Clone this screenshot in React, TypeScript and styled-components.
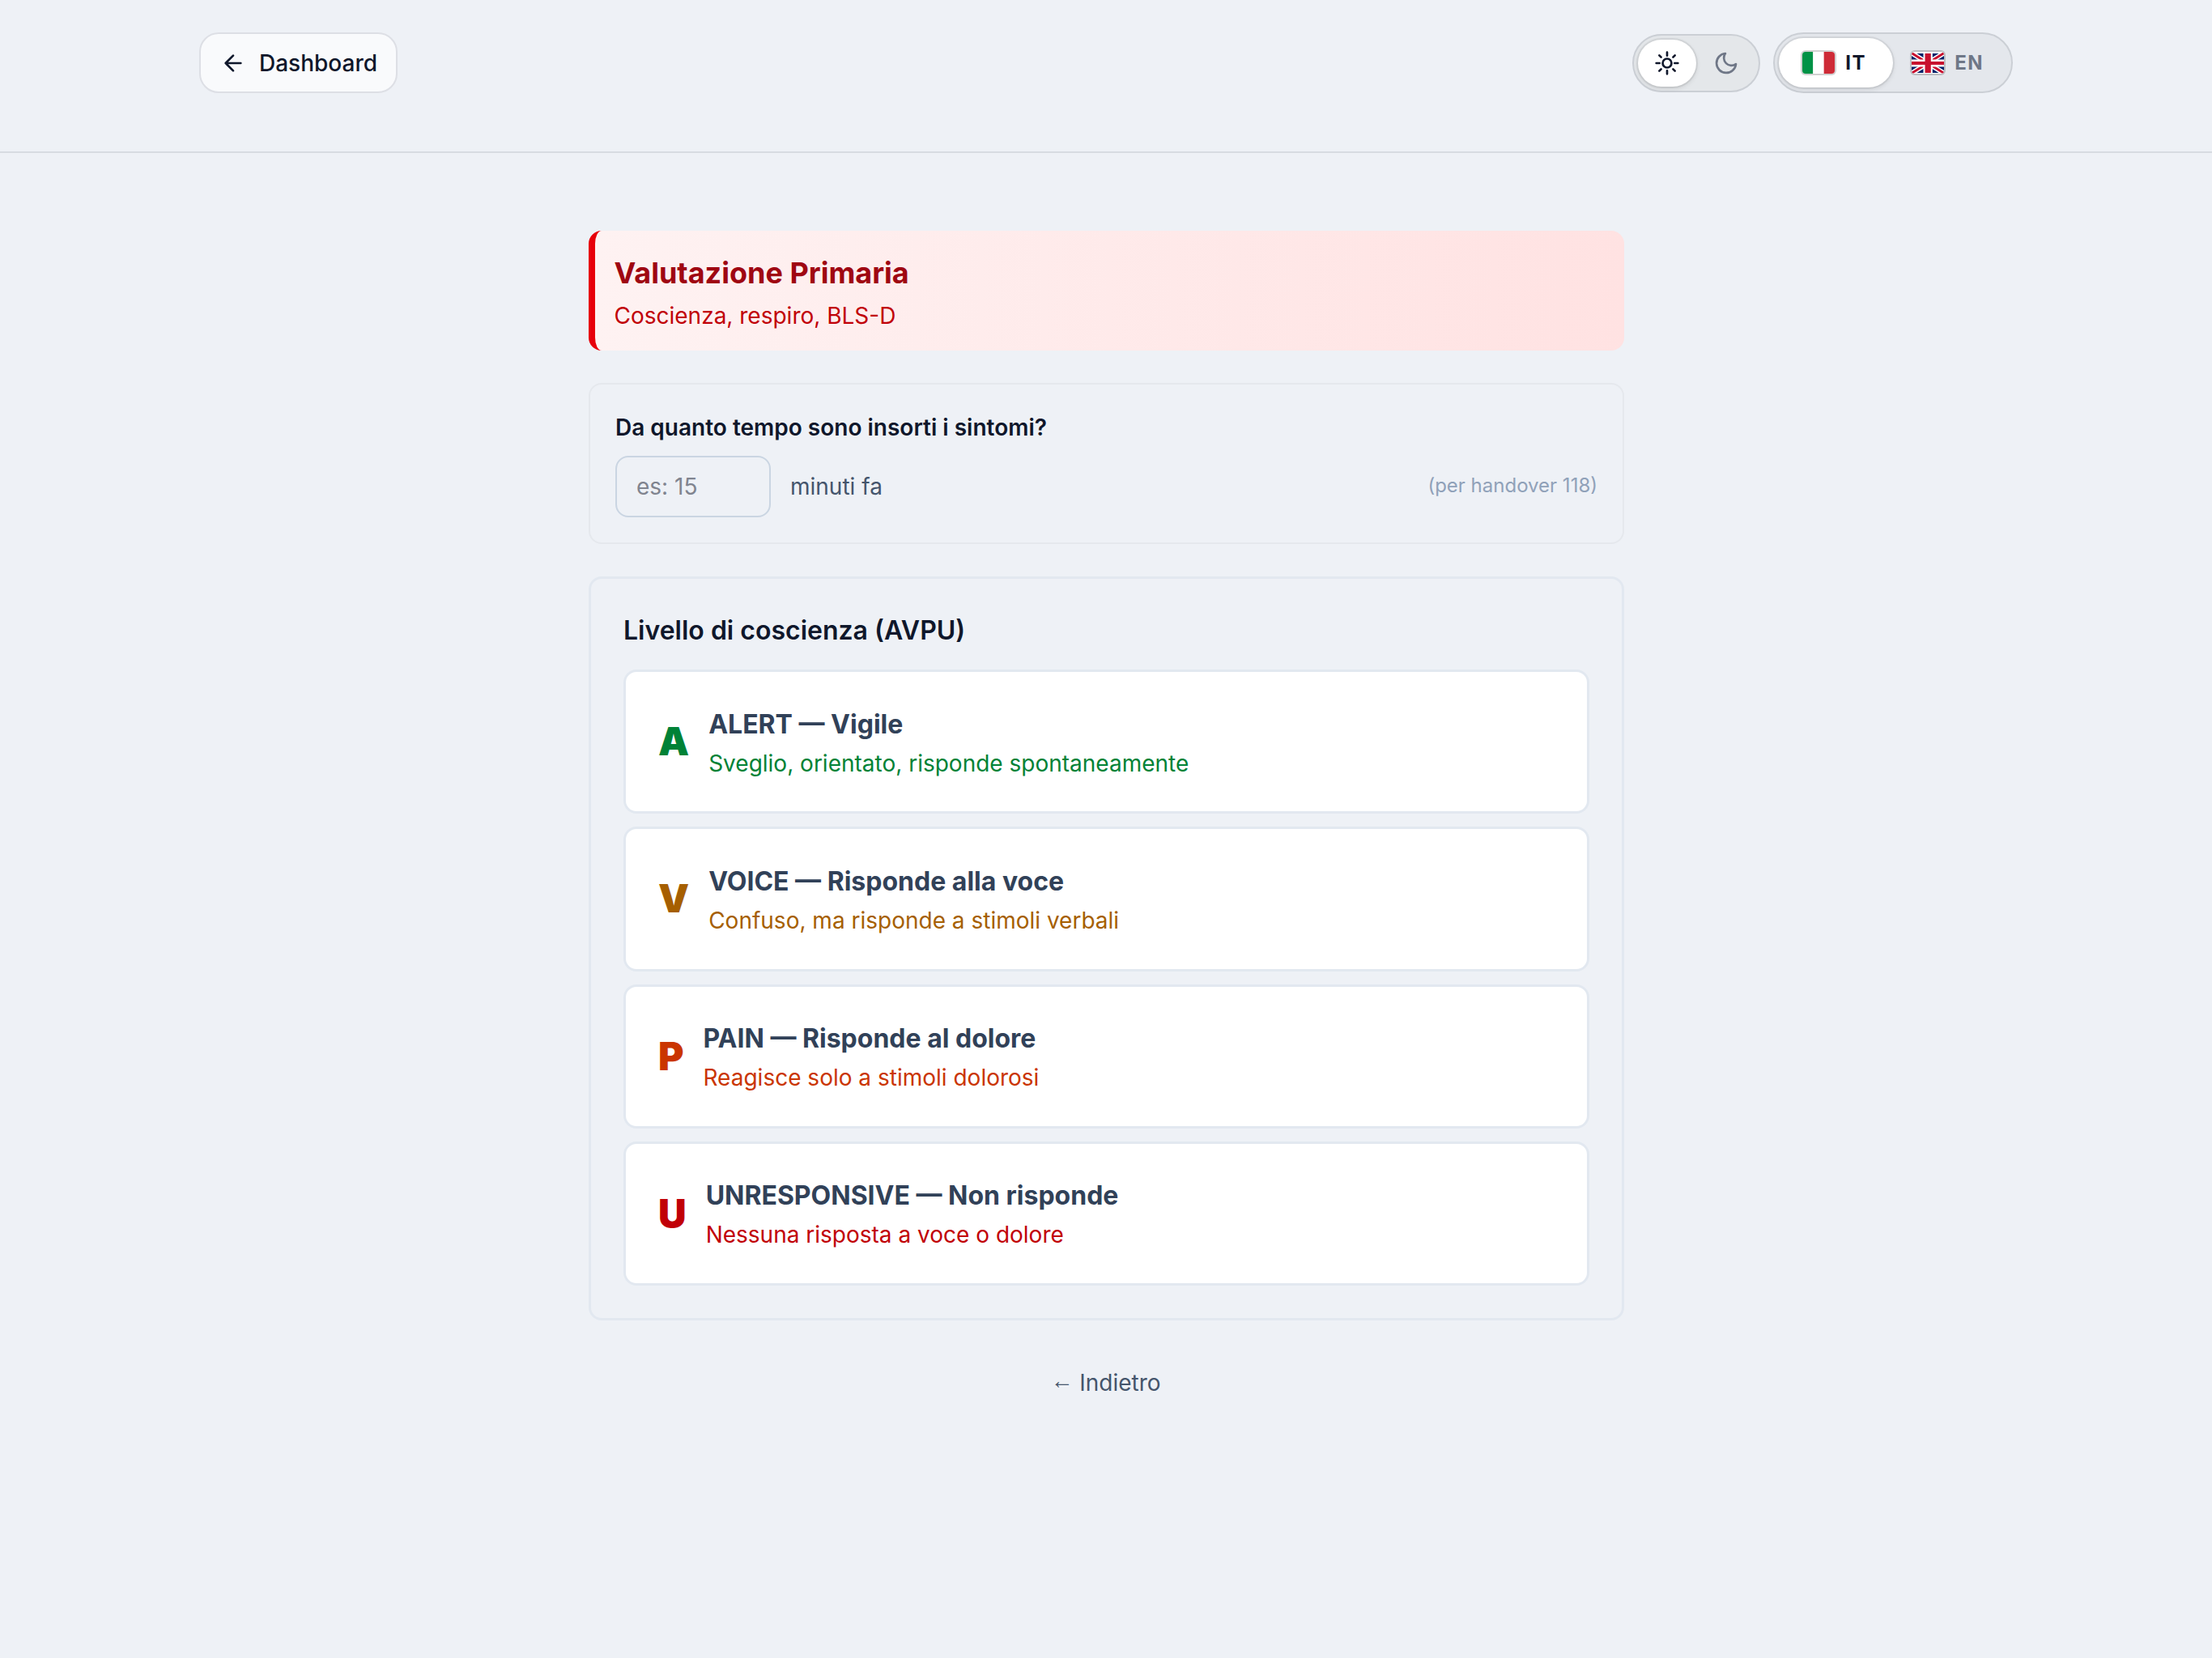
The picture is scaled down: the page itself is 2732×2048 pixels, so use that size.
import styled, { createGlobalStyle } from 'styled-components';

const GlobalStyle = createGlobalStyle`
  *,
  *::before,
  *::after {
    box-sizing: border-box;
  }

  body {
    margin: 0;
    min-height: 2048px;
    background: #eef1f6;
    color: #0f172b;
    font-family: Inter, 'Liberation Sans', sans-serif;
    font-size: 28px;
    line-height: 40px;
  }

  button,
  input {
    margin: 0;
    font: inherit;
    color: inherit;
  }
`;

const Header = styled.header`
  height: 189px;
  padding-top: 40px;
  border-bottom: 2px solid #d7dbe1;
`;

const HeaderInner = styled.div`
  display: flex;
  align-items: center;
  justify-content: space-between;
  width: 2240px;
  height: 75px;
  margin: 0 auto;
`;

const DashboardLink = styled.button`
  display: flex;
  align-items: center;
  gap: 16px;
  height: 75px;
  padding: 0 23px 0 24px;
  border: 2px solid #dddfe5;
  border-radius: 24px;
  background: #f9fafc;
  font-weight: 500;
`;

const HeaderActions = styled.div`
  display: flex;
  align-items: center;
  gap: 16px;
`;

const Switcher = styled.div<{ $padding: number; $height: number; $background: string }>`
  position: relative;
  display: flex;
  height: ${({ $height }) => $height}px;
  padding: ${({ $padding }) => $padding}px;
  border: 2px solid #cbcfd5;
  border-radius: 999px;
  background: ${({ $background }) => $background};
`;

const Thumb = styled.span<{ $inset: number }>`
  position: absolute;
  top: ${({ $inset }) => $inset}px;
  bottom: ${({ $inset }) => $inset}px;
  left: ${({ $inset }) => $inset}px;
  width: calc(50% - ${({ $inset }) => $inset}px);
  border-radius: 999px;
  background: #fff;
  box-shadow:
    0 2px 6px rgba(0, 0, 0, 0.12),
    0 0 0 2px rgba(0, 0, 0, 0.06);
`;

const ThemeButton = styled.button<{ $active?: boolean }>`
  position: relative;
  display: flex;
  align-items: center;
  justify-content: center;
  width: 73px;
  padding: 0;
  border: 0;
  background: none;
  color: ${({ $active }) => ($active ? '#0f172b' : '#6f7787')};
`;

const LangButton = styled.button<{ $active?: boolean }>`
  position: relative;
  display: flex;
  align-items: center;
  gap: 13px;
  padding: 0 28px;
  border: 0;
  background: none;
  font-size: 24px;
  font-weight: 700;
  letter-spacing: 1.5px;
  color: ${({ $active }) => ($active ? '#0f172b' : '#6f7787')};
`;

const Flag = styled.svg`
  display: block;
  width: 40px;
  height: 27px;
  border-radius: 4px;
  box-shadow: 0 0 0 2px rgba(0, 0, 0, 0.18);
`;

const Main = styled.main`
  display: flex;
  flex-direction: column;
  width: 1280px;
  margin: 0 auto;
  padding: 96px 0 0 1px;
`;

const Banner = styled.section`
  height: 148px;
  padding: 24px 24px 24px 23.5px;
  border-left: 8px solid #e7000b;
  border-radius: 16px;
  background: linear-gradient(to right, #fef2f2, #ffe2e2);
`;

const BannerTitle = styled.h1`
  margin: 0;
  font-size: 36px;
  font-weight: 700;
  line-height: 56px;
  color: #9f0712;
`;

const BannerText = styled.p`
  margin: 5px 0 0;
  color: #c10007;
`;

const OnsetCard = styled.section`
  height: 199px;
  margin-top: 40px;
  padding: 33px 31px 0;
  border: 2px solid #e5e8ed;
  border-radius: 16px;
`;

const OnsetLabel = styled.label`
  display: block;
  font-weight: 600;
`;

const OnsetRow = styled.div`
  display: flex;
  align-items: center;
  gap: 24px;
  margin-top: 15px;
`;

const MinutesInput = styled.input`
  width: 192px;
  height: 76px;
  padding: 0 24px;
  border: 2px solid #cad5e2;
  border-radius: 16px;
  outline: 0;
  background: transparent;

  &::placeholder {
    color: #80848f;
    opacity: 1;
  }
`;

const Unit = styled.span`
  color: #45556c;
`;

const Hint = styled.span`
  margin: 0 0 2px auto;
  font-size: 24px;
  line-height: 32px;
  color: #90a1b9;
`;

const AvpuCard = styled.section`
  display: flex;
  flex-direction: column;
  margin-top: 40px;
  padding: 40px;
  border: 3px solid #e2e8f0;
  border-radius: 16px;
`;

const AvpuTitle = styled.h2`
  margin: 0 0 24px;
  font-size: 32px;
  font-weight: 600;
  line-height: 48px;
`;

const OptionList = styled.div`
  display: flex;
  flex-direction: column;
  gap: 16px;
`;

const Option = styled.button<{ $color: string }>`
  display: flex;
  align-items: center;
  gap: 24px;
  height: 178.25px;
  padding: 0 40px;
  border: 3px solid #e2e8f0;
  border-radius: 16px;
  background: #fff;
  color: ${({ $color }) => $color};
  text-align: left;
`;

const OptionLetter = styled.span`
  font-size: 48px;
  font-weight: 900;
  line-height: 64px;
`;

const OptionBody = styled.div`
  padding-top: 1px;
`;

const OptionTitle = styled.div`
  font-size: 32px;
  font-weight: 700;
  line-height: 48px;
  color: #314158;
`;

const OptionText = styled.div`
  margin-top: 4px;
`;

const BackButton = styled.button`
  align-self: center;
  margin-top: 57px;
  padding: 0 2px 0 0;
  border: 0;
  background: none;
  color: #45556c;
`;

const BackArrow = styled.span`
  font-family: 'Liberation Sans', sans-serif;
  line-height: 0;
  vertical-align: 3px;
`;

const levels = [
  {
    letter: 'A',
    title: 'ALERT — Vigile',
    text: 'Sveglio, orientato, risponde spontaneamente',
    color: '#008236',
  },
  {
    letter: 'V',
    title: 'VOICE — Risponde alla voce',
    text: 'Confuso, ma risponde a stimoli verbali',
    color: '#a65f00',
  },
  {
    letter: 'P',
    title: 'PAIN — Risponde al dolore',
    text: 'Reagisce solo a stimoli dolorosi',
    color: '#ca3500',
  },
  {
    letter: 'U',
    title: 'UNRESPONSIVE — Non risponde',
    text: 'Nessuna risposta a voce o dolore',
    color: '#c10007',
  },
];

const Icon = styled.svg.attrs({ viewBox: '0 0 24 24' })`
  width: 32px;
  height: 32px;
  fill: none;
  stroke: currentColor;
  stroke-width: 2;
  stroke-linecap: round;
  stroke-linejoin: round;
`;

function ArrowIcon() {
  return (
    <Icon>
      <path d="M19 12H5M12 19l-7-7 7-7" />
    </Icon>
  );
}

function SunIcon() {
  return (
    <Icon>
      <circle cx="12" cy="12" r="4.1" />
      <path d="M12 2v3M12 19v3M2 12h3M19 12h3M4.75 4.75l1.7 1.7M17.55 17.55l1.7 1.7M4.75 19.25l1.7-1.7M17.55 6.45l1.7-1.7" />
    </Icon>
  );
}

function MoonIcon() {
  return (
    <Icon>
      <path d="M21 12.79A9 9 0 1 1 11.21 3 7 7 0 0 0 21 12.79z" />
    </Icon>
  );
}

function ItalianFlag() {
  return (
    <Flag viewBox="0 0 3 2" preserveAspectRatio="none">
      <path fill="#009246" d="M0 0h1v2H0z" />
      <path fill="#fff" d="M1 0h1v2H1z" />
      <path fill="#ce2b37" d="M2 0h1v2H2z" />
    </Flag>
  );
}

function BritishFlag() {
  return (
    <Flag viewBox="0 0 40 27">
      <path fill="#fff" d="M0 0h40v27H0z" />
      <path fill="#012169" d="M0 2h40v24H0z" />
      <path stroke="#fff" strokeWidth="6" d="M0 1.5l40 25M40 1.5l-40 25" />
      <path stroke="#c8102e" strokeWidth="2.8" d="M0 1.5l40 25M40 1.5l-40 25" />
      <path fill="#fff" d="M14.5 0h11.3v27H14.5zM0 9.5h40v9H0z" />
      <path fill="#c8102e" d="M16.5 2h7.3v24h-7.3zM0 12h40v4H0z" />
    </Flag>
  );
}

export default function App() {
  return (
    <>
      <GlobalStyle />
      <Header>
        <HeaderInner>
          <DashboardLink>
            <ArrowIcon />
            Dashboard
          </DashboardLink>
          <HeaderActions>
            <Switcher $padding={4} $height={72} $background="#e4e7ea">
              <Thumb $inset={5} />
              <ThemeButton $active aria-label="Tema chiaro">
                <SunIcon />
              </ThemeButton>
              <ThemeButton aria-label="Tema scuro">
                <MoonIcon />
              </ThemeButton>
            </Switcher>
            <Switcher $padding={6} $height={75} $background="#e4e7ec">
              <Thumb $inset={5} />
              <LangButton $active>
                <ItalianFlag />
                IT
              </LangButton>
              <LangButton>
                <BritishFlag />
                EN
              </LangButton>
            </Switcher>
          </HeaderActions>
        </HeaderInner>
      </Header>
      <Main>
        <Banner>
          <BannerTitle>Valutazione Primaria</BannerTitle>
          <BannerText>Coscienza, respiro, BLS-D</BannerText>
        </Banner>
        <OnsetCard>
          <OnsetLabel htmlFor="onset">Da quanto tempo sono insorti i sintomi?</OnsetLabel>
          <OnsetRow>
            <MinutesInput id="onset" placeholder="es: 15" />
            <Unit>minuti fa</Unit>
            <Hint>(per handover 118)</Hint>
          </OnsetRow>
        </OnsetCard>
        <AvpuCard>
          <AvpuTitle>Livello di coscienza (AVPU)</AvpuTitle>
          <OptionList>
            {levels.map(({ letter, title, text, color }) => (
              <Option key={letter} $color={color}>
                <OptionLetter>{letter}</OptionLetter>
                <OptionBody>
                  <OptionTitle>{title}</OptionTitle>
                  <OptionText>{text}</OptionText>
                </OptionBody>
              </Option>
            ))}
          </OptionList>
        </AvpuCard>
        <BackButton>
          <BackArrow>←</BackArrow> Indietro
        </BackButton>
      </Main>
    </>
  );
}
